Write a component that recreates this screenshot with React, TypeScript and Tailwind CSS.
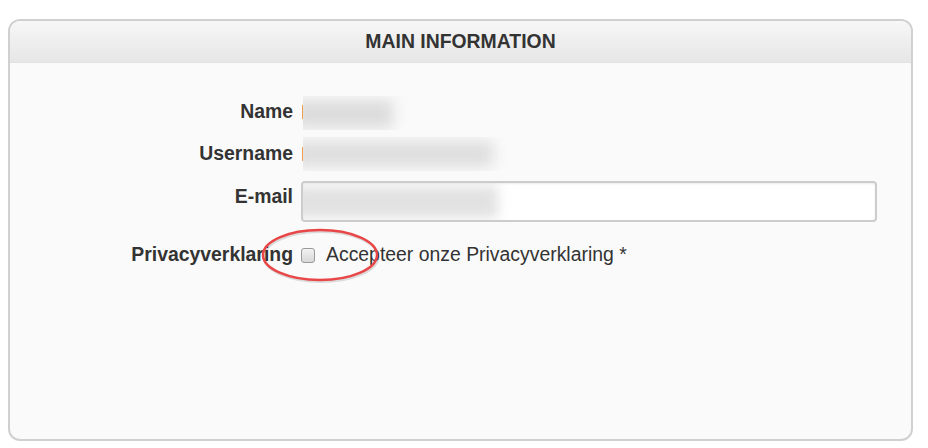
import { useState } from 'react';

const App = () => {
  const [akkoord, setAkkoord] = useState(false);

  return (
    <div className="w-[928px] h-[448px] bg-white pt-[19px] pl-[8px] font-['Liberation_Sans',Arial,sans-serif] text-[#333]">
      <div className="w-[905px] h-[422px] rounded-[12px] border-2 border-[#d0d0d0] bg-[#fafafa] overflow-hidden flex flex-col">
        {/* Header */}
        <div className="h-[42px] shrink-0 flex items-center justify-center bg-gradient-to-b from-[#f7f7f7] to-[#e6e6e6] border-b border-[#e2e2e2]">
          <h2 className="text-[19.4px] font-bold text-[#333]">MAIN INFORMATION</h2>
        </div>

        {/* Formulier */}
        <div className="flex flex-col pt-[34px]">
          <div className="flex items-center h-[30px]">
            <label className="w-[283px] text-right font-bold text-[19.4px]">Name</label>
            <div className="ml-[9px] h-[30px] flex items-center relative">
              <span className="w-px h-[14px] bg-[#f0a050]" />
              <div className="absolute left-[1px] top-[-1px] w-[110px] h-[34px] overflow-hidden">
                <div className="absolute left-[-10px] top-[4px] w-[100px] h-[28px] bg-[#dcdcdc] blur-[7px]" />
              </div>
            </div>
          </div>

          <div className="flex items-center h-[30px] mt-[12px]">
            <label className="w-[283px] text-right font-bold text-[19.4px]">Username</label>
            <div className="ml-[9px] h-[30px] flex items-center relative">
              <span className="w-px h-[14px] bg-[#f0a050]" />
              <div className="absolute left-[1px] top-[-2px] w-[210px] h-[34px] overflow-hidden">
                <div className="absolute left-[-10px] top-[4px] w-[200px] h-[26px] bg-[#dedede] blur-[7px]" />
              </div>
            </div>
          </div>

          <div className="flex items-start mt-[12px]">
            <label className="w-[283px] text-right font-bold text-[19.4px] leading-[24px] pt-[3px]">E-mail</label>
            <div className="ml-[8px] w-[576px] h-[41px] rounded-[4px] border-2 border-[#cccccc] bg-white shadow-[inset_0_1px_2px_rgba(0,0,0,0.08)] relative overflow-hidden">
              <div className="absolute left-[-10px] top-[3px] w-[205px] h-[32px] bg-[#e2e2e2] blur-[6px]" />
            </div>
          </div>

          <div className="flex items-center h-[26px] mt-[20px] relative">
            <label className="w-[283px] text-right font-bold text-[19.4px]">Privacyverklaring</label>
            <button
              onClick={() => setAkkoord(!akkoord)}
              className="ml-[8px] w-[14px] h-[15px] rounded-[3px] border border-[#9a9a9a] bg-gradient-to-b from-[#f2f2f2] to-[#d8d8d8] flex items-center justify-center text-[11px] leading-none"
            >
              {akkoord ? '✓' : ''}
            </button>
            <span className="ml-[11px] text-[19.4px]">Accepteer onze Privacyverklaring *</span>

            {/* rode markering */}
            <svg className="absolute left-[244px] top-[-17px] pointer-events-none" width="130" height="60" viewBox="0 0 130 60">
              <ellipse cx="66" cy="30" rx="57" ry="25" fill="none" stroke="rgba(0,0,0,0.12)" strokeWidth="3" transform="translate(1 1.5)" />
              <ellipse cx="66" cy="30" rx="57" ry="25" fill="none" stroke="#e94747" strokeWidth="2.5" />
            </svg>
          </div>
        </div>
      </div>
    </div>
  );
};

export default App;
